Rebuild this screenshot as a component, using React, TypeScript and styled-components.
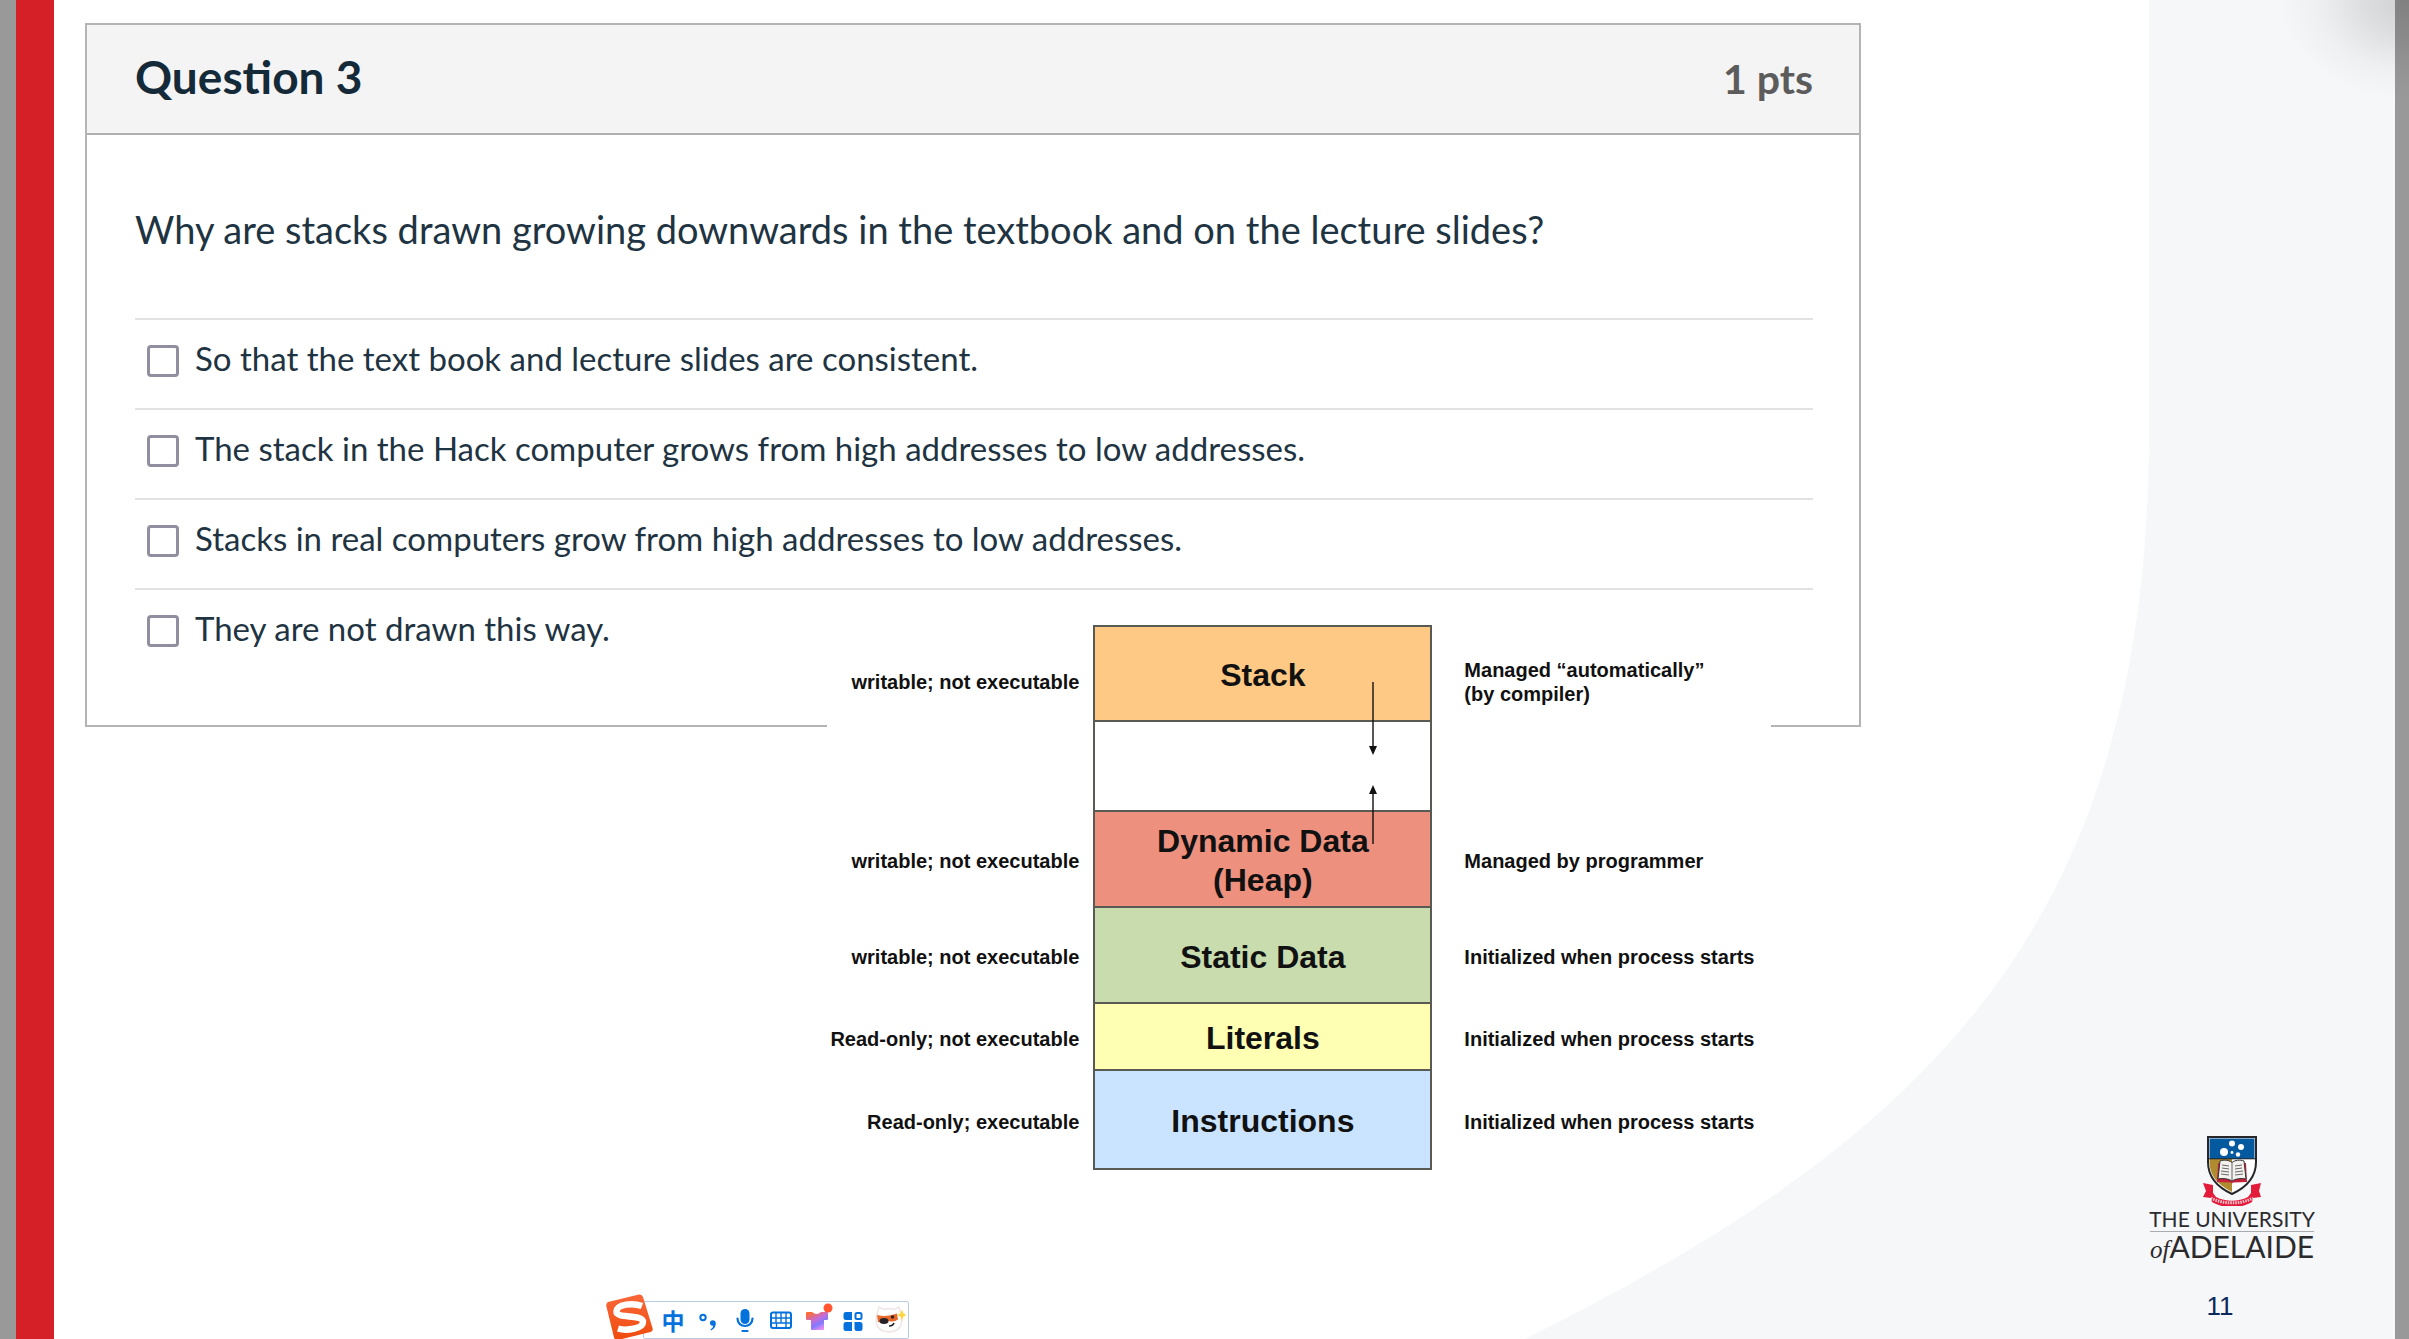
import React from "react";
import styled, { createGlobalStyle } from "styled-components";

const lato = `Lato, "Open Sans", sans-serif`;
const arial = `"Liberation Sans", Arial, sans-serif`;

const GlobalStyle = createGlobalStyle`
  *, *::before, *::after { box-sizing: border-box; }
  body { margin: 0; background: #999; font-family: ${lato}; }
`;

const Viewer = styled.div`
  position: relative;
  display: flex;
  min-height: 100vh;
  padding-right: 14px;
  padding-left: 16px;
  background: #999;
  overflow: hidden;
`;

const RedStripe = styled.div`
  flex: 0 0 38px;
  background: #d52027;
`;

const Slide = styled.main`
  position: relative;
  flex: 1;
  display: grid;
  grid-template-columns: minmax(0, 1776fr) minmax(0, 534fr);
  padding: 23px 0 18px 31px;
  background: #fff;
`;

const Backdrop = styled.svg`
  position: absolute;
  inset: 0;
  width: 100%;
  height: 100%;
`;

const WindowShadow = styled.div`
  position: absolute;
  top: 0;
  right: 0;
  width: 130px;
  height: 100px;
  background: radial-gradient(
    ellipse farthest-side at 100% 0,
    rgba(0, 0, 0, 0.16),
    rgba(0, 0, 0, 0.1) 35%,
    rgba(0, 0, 0, 0.03) 70%,
    transparent
  );
`;

const Content = styled.div`
  position: relative;
  align-self: start;
`;

const Card = styled.section`
  border: 2px solid #b4b4b4;
  background: #fff;
  color: #1f3442;
`;

const CardHeader = styled.header`
  display: flex;
  align-items: baseline;
  justify-content: space-between;
  height: 110px;
  padding: 24px 46px 0 48px;
  border-bottom: 2px solid #b0b0b0;
  background: #f4f4f4;
`;

const CardTitle = styled.h1`
  margin: 0;
  font-size: 46px;
  line-height: 56px;
  font-weight: 700;
  color: #152a39;
`;

const Points = styled.span`
  font-size: 41px;
  line-height: 56px;
  font-weight: 700;
  color: #5c5c5c;
`;

const CardBody = styled.div`
  padding: 70px 46px 47px 48px;
`;

const Question = styled.p`
  margin: 0 0 65px;
  font-size: 38px;
  line-height: 48px;
`;

const Answers = styled.fieldset`
  margin: 0;
  padding: 0;
  border: 0;
`;

const Answer = styled.label`
  display: flex;
  align-items: center;
  gap: 16px;
  height: 90px;
  padding: 0 12px 12px;
  border-top: 2px solid #e2e2e2;
  font-size: 33px;
  line-height: 44px;
`;

const Checkbox = styled.input`
  appearance: none;
  flex: none;
  width: 32px;
  height: 32px;
  margin: 6px 0 0;
  border: 3px solid #918f9f;
  border-radius: 4px;
  background: #fff;
  &:checked {
    background: #918f9f;
  }
`;

const MemoryMap = styled.figure`
  position: relative;
  width: 944px;
  margin: -114px 0 0 41.8%;
  padding: 12px 0 20px;
  background: #fff;
  color: #111;
  font-family: ${arial};
  font-weight: 700;
`;

const Segment = styled.div<{ $height: number }>`
  display: grid;
  grid-template-columns: 266px 339px 339px;
  height: ${(p) => p.$height}px;
`;

const SideText = styled.div<{ $side: "left" | "right"; $low?: boolean }>`
  display: flex;
  align-items: center;
  justify-content: ${(p) => (p.$side === "left" ? "flex-end" : "flex-start")};
  padding: ${(p) => (p.$low ? "16px" : "2px")} ${(p) => (p.$side === "left" ? "14px" : "0")} 0
    ${(p) => (p.$side === "right" ? "32px" : "0")};
  font-size: 20px;
  line-height: 24px;
  white-space: pre-line;
`;

const Block = styled.div<{ $fill: string; $first?: boolean }>`
  position: relative;
  display: flex;
  align-items: center;
  justify-content: center;
  padding-top: 4px;
  border: 2px solid #5a5a55;
  border-top-width: ${(p) => (p.$first ? "2px" : "0")};
  background: ${(p) => p.$fill};
  font-size: 32px;
  line-height: 39px;
  text-align: center;
  white-space: pre-line;
`;

const Arrows = styled.svg`
  position: absolute;
  z-index: 1;
  top: -40px;
  right: 52px;
  width: 10px;
  height: 162px;
`;

const Brand = styled.aside`
  position: relative;
  align-self: end;
  justify-self: end;
  display: flex;
  flex-direction: column;
  align-items: center;
  width: 164px;
  margin-right: 81px;
  color: #2b2a2c;
`;

const Crest = styled.svg`
  width: 60px;
  height: 70px;
`;

const BrandTop = styled.div`
  display: flex;
  justify-content: center;
  align-self: stretch;
  padding-top: 1px;
  border-bottom: 1px solid #a9abae;
  font-size: 21px;
  line-height: 24px;
  white-space: nowrap;
`;

const BrandBottom = styled.div`
  display: flex;
  align-items: baseline;
  font-size: 30px;
  line-height: 28px;
  white-space: nowrap;
`;

const Of = styled.span`
  font-family: "Liberation Serif", serif;
  font-style: italic;
  font-size: 25px;
`;

const PageNumber = styled.div`
  align-self: stretch;
  margin-top: 27px;
  padding-right: 24px;
  font-family: ${arial};
  font-size: 26px;
  line-height: 30px;
  text-align: center;
  color: #0b2a5b;
`;

const InputBar = styled.div`
  position: absolute;
  bottom: 0;
  left: 605px;
  display: flex;
  align-items: flex-end;
`;

const Tools = styled.div`
  display: flex;
  align-items: center;
  height: 38px;
  margin-left: -10px;
  padding: 0 1px 0 11px;
  border: 1px solid #b9cbe2;
  border-radius: 2px;
  background: #fff;
`;

const Tool = styled.button`
  display: flex;
  align-items: center;
  justify-content: center;
  width: 36px;
  height: 36px;
  padding: 0;
  border: 0;
  background: none;
  color: #0471dc;
  font-family: "Noto Sans CJK SC", sans-serif;
  font-size: 23px;
  line-height: 30px;
  font-weight: 700;
`;

const Glyph = styled.svg`
  display: block;
  width: 34px;
  height: 36px;
`;

const SogouLogo = styled.svg`
  position: relative;
  display: block;
  width: 48px;
  height: 45px;
`;

const answers = [
  "So that the text book and lecture slides are consistent.",
  "The stack in the Hack computer grows from high addresses to low addresses.",
  "Stacks in real computers grow from high addresses to low addresses.",
  "They are not drawn this way.",
];

type SegmentData = {
  name: string;
  fill: string;
  height: number;
  access: string;
  note: string;
  low?: boolean;
};

const segments: SegmentData[] = [
  { name: "Stack", fill: "#fec985", height: 97, access: "writable; not executable", note: "Managed “automatically”\n(by compiler)", low: true },
  { name: "", fill: "#ffffff", height: 90, access: "", note: "" },
  { name: "Dynamic Data\n(Heap)", fill: "#ed907e", height: 96, access: "writable; not executable", note: "Managed by programmer" },
  { name: "Static Data", fill: "#c9dcae", height: 96, access: "writable; not executable", note: "Initialized when process starts" },
  { name: "Literals", fill: "#feffb2", height: 67, access: "Read-only; not executable", note: "Initialized when process starts" },
  { name: "Instructions", fill: "#cae4ff", height: 99, access: "Read-only; executable", note: "Initialized when process starts" },
];

function GrowthArrows() {
  return (
    <Arrows viewBox="0 0 10 162" aria-hidden="true">
      <path d="M5 0V66M5 162V110" stroke="#111" strokeWidth="1.4" />
      <path d="M1 64h8l-4 9zM1 112h8l-4-9z" fill="#111" />
    </Arrows>
  );
}

function UniversityCrest() {
  return (
    <Crest viewBox="0 0 60 70" aria-hidden="true">
      <path d="M1 47l10 2v8l3 4c10 5 22 5 32 0l3-4v-8l10-2-2 8 2 6-8 1-1 4c-12 7-28 7-40 0l-1-4-8-1 3-6z" fill="#e31b3a" />
      <path d="M6 1h48v25c0 15-9 25-24 32C15 51 6 41 6 26z" fill="#fff" stroke="#26262a" strokeWidth="2" />
      <path d="M7.500 2.500h45V23h-45z" fill="#04599f" />
      <path d="M7.500 23H30v33C16 49 7.500 40 7.500 26z" fill="#b08a2e" />
      <path d="M7 22.800h46" stroke="#26262a" strokeWidth="1" />
      <g fill="#fff">
        <circle cx="22" cy="16" r="4" />
        <circle cx="30" cy="7.500" r="3" />
        <circle cx="39" cy="11" r="3" />
        <circle cx="36" cy="18.500" r="2.200" />
        <circle cx="30" cy="16.500" r="1.400" />
      </g>
      <path d="M16 27l-1 19 14 .5 1 1 1-1 14-.5-1-19z" fill="#c8203a" />
      <path d="M18 25c4-1.500 9-1 12 1.500 3-2.500 8-3 12-1.500l2 18c-5-1-10-.5-14 2-4-2.500-9-3-14-2z" fill="#f4f2ee" stroke="#333" strokeWidth="1" />
      <path d="M30 26.500V45M20 29l7 1M20 32l7 1M19 35l8 1M19 38l8 1M40 29l-7 1M40 32l-7 1M41 35l-8 1M41 38l-8 1" stroke="#666" strokeWidth="1" fill="none" />
      <path d="M9 62c12 6.500 30 6.500 42 0" stroke="#fff" strokeWidth="3" strokeDasharray="1.500 1" fill="none" opacity=".75" />
    </Crest>
  );
}

function InputMethodBar() {
  return (
    <InputBar>
      <SogouLogo viewBox="0 0 48 45" aria-hidden="true">
        <defs>
          <linearGradient id="sogou" x1="0" y1="0" x2="0" y2="1">
            <stop offset="0" stopColor="#f9683a" />
            <stop offset="1" stopColor="#f04a0c" />
          </linearGradient>
        </defs>
        <path d="M3 8L34 .500q3-.500 4 2.500l9.500 31q1 3-2 4L13 46q-3 .500-4-2.500L1.300 12Q1 9 3 8z" fill="url(#sogou)" />
        <path d="M37 12C28 8.500 12 10 11.500 17.500 11 25 37 20 38 27.500 38.500 35 21 37 13 34.500" fill="none" stroke="#fff" strokeWidth="6.500" />
      </SogouLogo>
      <Tools role="toolbar" aria-label="Input method">
        <Tool>中</Tool>
        <Tool aria-label="Punctuation">
          <Glyph viewBox="0 0 34 36">
            <circle cx="11" cy="15.500" r="2.700" fill="none" stroke="#0471dc" strokeWidth="2" />
            <circle cx="20.800" cy="21" r="2.800" fill="#0471dc" />
            <path d="M23.600 20.500c.5 3.500-1 6.500-4.600 8l-.5-1.200c2-1 2.800-2.500 2.600-4.300z" fill="#0471dc" />
          </Glyph>
        </Tool>
        <Tool aria-label="Voice">
          <Glyph viewBox="0 0 34 36">
            <rect x="12.500" y="7" width="9" height="15" rx="4.500" fill="#0471dc" />
            <path d="M9.500 16.500c0 10 15 10 15 0M14.500 29h5" fill="none" stroke="#0471dc" strokeWidth="2.200" strokeLinecap="round" />
          </Glyph>
        </Tool>
        <Tool aria-label="Keyboard">
          <Glyph viewBox="0 0 34 36">
            <rect x="7" y="10.500" width="20" height="15.500" rx="2" fill="none" stroke="#0471dc" strokeWidth="2" />
            <path d="M7 16h20M7 21h20M12 10.500V21M17 10.500V21M22 10.500V21M12.500 21v5M22 21v5" stroke="#0471dc" strokeWidth="1.400" />
          </Glyph>
        </Tool>
        <Tool aria-label="Skins">
          <Glyph viewBox="0 0 34 36">
            <defs>
              <linearGradient id="shirt" x1="0" y1="0" x2=".6" y2="1">
                <stop offset=".1" stopColor="#ff6a2e" />
                <stop offset=".5" stopColor="#c46cd8" />
                <stop offset=".75" stopColor="#7f7bff" />
                <stop offset="1" stopColor="#e58bf0" />
              </linearGradient>
            </defs>
            <path d="M7 10h5q4.500 4 9 0h6q1 0 1 1v6q0 1-1 1h-3v9q0 1-1 1H12q-1 0-1-1v-9H7q-1 0-1-1v-6q0-1 1-1z" fill="url(#shirt)" />
            <circle cx="28" cy="6" r="4.500" fill="#ff5630" />
          </Glyph>
        </Tool>
        <Tool aria-label="Toolbox">
          <Glyph viewBox="0 0 34 36">
            <path d="M10 10h6v8h-6q-2.500 0-2.500-2.500v-3Q7.500 10 10 10zM10 20h6v9h-6q-2.500 0-2.500-2.500v-4Q7.500 20 10 20zM18.500 20H24q2.500 0 2.500 2.500v4Q26.500 29 24 29h-3q-2.500 0-2.500-2.500z" fill="#0471dc" />
            <rect x="19.500" y="11" width="6" height="6" rx="1.500" fill="none" stroke="#0471dc" strokeWidth="2" />
          </Glyph>
        </Tool>
        <Tool aria-label="Assistant">
          <Glyph viewBox="0 0 34 36">
            <path d="M5 12l2-7 5 2.500q5-1.500 10 0L27 5l2 7q4 17-12 18Q1 29 5 12z" fill="#fff" stroke="#efe5e5" strokeWidth="1.500" />
            <path d="M5 13q10 2.500 20-1.500l1 6q-4 3-9 1.500-5 3-11 1z" fill="#e8692a" />
            <ellipse cx="12" cy="19" rx="4.500" ry="3" fill="#26222a" />
            <circle cx="20.500" cy="15" r="1.800" fill="#3a2420" />
            <path d="M17 24q4 0 5-3" fill="none" stroke="#26222a" strokeWidth="1.600" />
            <path d="M30 7.500l1.500 4 3 1.500-3 1.500-1.500 4-1.500-4-3.500-1.500 3.500-1.500z" fill="#ffd53e" />
          </Glyph>
        </Tool>
      </Tools>
    </InputBar>
  );
}

export default function App() {
  return (
    <Viewer>
      <GlobalStyle />
      <RedStripe />
      <Slide>
        <Backdrop viewBox="0 0 2341 1339" preserveAspectRatio="none" aria-hidden="true">
          <path d="M2095 0V430C2095 930 1871 1139 1471 1339H2341V0z" fill="#f5f7f9" />
        </Backdrop>
        <Content>
          <Card>
            <CardHeader>
              <CardTitle>Question 3</CardTitle>
              <Points>1 pts</Points>
            </CardHeader>
            <CardBody>
              <Question id="question">
                Why are stacks drawn growing downwards in the textbook and on the lecture slides?
              </Question>
              <Answers aria-labelledby="question">
                {answers.map((text) => (
                  <Answer key={text}>
                    <Checkbox type="checkbox" />
                    <span>{text}</span>
                  </Answer>
                ))}
              </Answers>
            </CardBody>
          </Card>
          <MemoryMap>
            {segments.map((s, i) => (
              <Segment key={i} $height={s.height}>
                <SideText $side="left" $low={s.low}>{s.access}</SideText>
                <Block $fill={s.fill} $first={i === 0}>
                  {s.name || <GrowthArrows />}
                </Block>
                <SideText $side="right" $low={s.low}>{s.note}</SideText>
              </Segment>
            ))}
          </MemoryMap>
        </Content>
        <Brand>
          <UniversityCrest />
          <BrandTop>THE UNIVERSITY</BrandTop>
          <BrandBottom>
            <Of>of</Of>ADELAIDE
          </BrandBottom>
          <PageNumber>11</PageNumber>
        </Brand>
      </Slide>
      <WindowShadow />
      <InputMethodBar />
    </Viewer>
  );
}
